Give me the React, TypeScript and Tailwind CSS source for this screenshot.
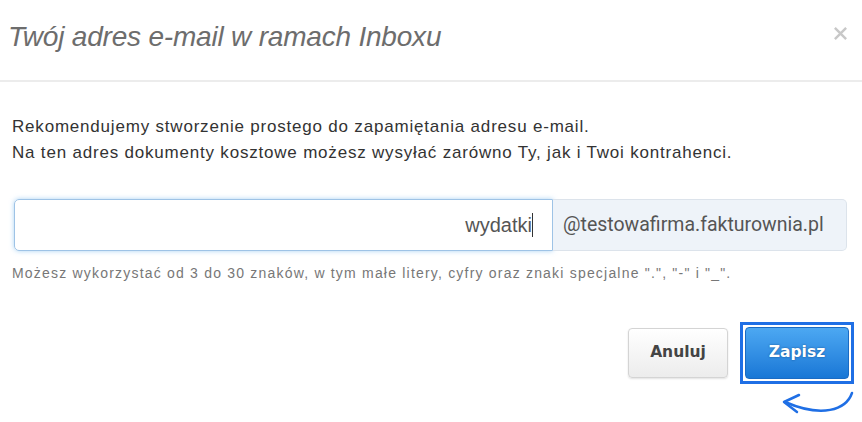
import React from "react";

export default function App() {
  return (
    <div className="relative w-[862px] h-[422px] bg-white font-['Liberation_Sans',Arial,sans-serif] text-[#333]">
      {/* header */}
      <div className="h-[82px] flex items-center justify-between border-b-2 border-[#ececec] pl-[8px] pr-[14px]">
        <h2 className="text-[28px] italic leading-none tracking-[-0.2px] text-[#6d6d6d] -mt-[6px]">
          Twój adres e-mail w ramach Inboxu
        </h2>
        <svg width="15" height="15" viewBox="0 0 16 16" className="-mt-[14px]">
          <path d="M2 2 L14 14 M14 2 L2 14" stroke="#c8c8c8" strokeWidth="2.6" />
        </svg>
      </div>

      {/* body */}
      <div className="px-[12px] pt-[32px]">
        <p className="text-[17px] leading-[26px] tracking-[0.8px] text-[#333]">
          Rekomendujemy stworzenie prostego do zapamiętania adresu e-mail.
          <br />
          Na ten adres dokumenty kosztowe możesz wysyłać zarówno Ty, jak i Twoi kontrahenci.
        </p>

        <div className="mt-[33px] ml-[2px] flex h-[52px]">
          <div className="w-[539px] flex items-center justify-end pr-[19px] border border-[#9ec3e6] rounded-l-[5px] shadow-[0_0_5px_rgba(102,175,233,0.55)] text-[20px] text-[#555]">
            <span>wydatki</span>
            <span className="w-[1px] h-[24px] bg-[#333]" />
          </div>
          <div className="w-[294px] flex items-center px-[10px] bg-[#eef3f9] border border-l-0 border-[#dce3eb] rounded-r-[5px] text-[19.5px] text-[#555] font-['Roboto',Arial,sans-serif]">
            @testowafirma.fakturownia.pl
          </div>
        </div>

        <p className="mt-[13px] text-[14px] leading-[18px] tracking-[1.2px] text-[#777]">
          Możesz wykorzystać od 3 do 30 znaków, w tym małe litery, cyfry oraz znaki specjalne ".", "-" i "_".
        </p>

        <div className="mt-[40px] -mr-[4px] flex justify-end items-center gap-[12px] font-['DejaVu_Sans',Verdana,sans-serif] font-bold">
          <button className="w-[100px] h-[50px] rounded-[4px] border border-[#d4d4d4] bg-gradient-to-b from-white to-[#ececec] shadow-[0_1px_2px_rgba(0,0,0,0.12)] text-[15.5px] text-[#444]">
            Anuluj
          </button>
          <div className="p-[2px] border-[3px] border-[#1f6fe5]">
            <button className="w-[104px] h-[52px] rounded-[4px] border border-[#1a6bc4] bg-gradient-to-b from-[#4ca8f2] to-[#1877d6] text-[15.5px] text-white [text-shadow:0_0_2px_rgba(0,40,90,0.6)]">
              Zapisz
            </button>
          </div>
        </div>
      </div>

      {/* annotation arrow */}
      <svg className="absolute left-[776px] top-[386px]" width="84" height="34" viewBox="0 0 84 34">
        <path d="M76 7 C70 24 46 32 9 16" fill="none" stroke="#1f6fe5" strokeWidth="2.5" strokeLinecap="round" />
        <path d="M23 9 L8 16 L21 26" fill="none" stroke="#1f6fe5" strokeWidth="2.5" strokeLinecap="round" strokeLinejoin="round" />
      </svg>
    </div>
  );
}
